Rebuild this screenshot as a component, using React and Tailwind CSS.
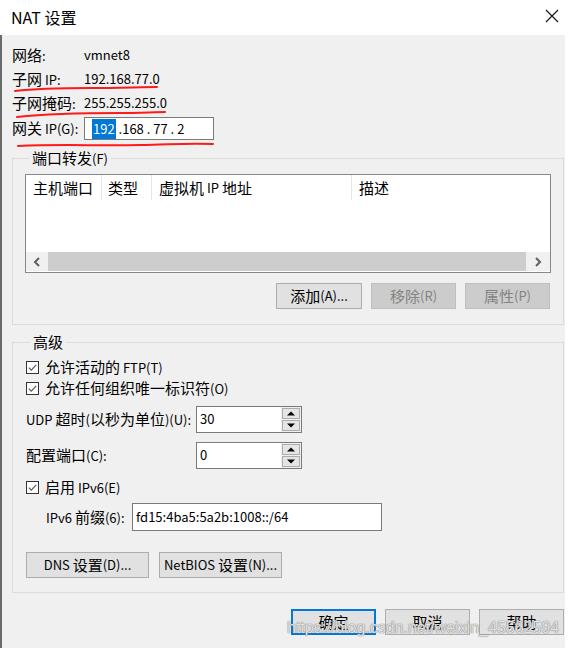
import React from "react";

const FONT = "font-['Microsoft_YaHei_UI','Noto_Sans_CJK_SC',sans-serif]";

// YaHei draws latin glyphs noticeably smaller than the CJK ones
const T = ({ children }) => {
    const parts = String(children).split(/([\u3000-\u9fff\uff00-\uffef]+)/);
    return (
        <>
            {parts.map((p, i) =>
                p === "" ? null : /[\u3000-\u9fff\uff00-\uffef]/.test(p) ? (
                    <span key={i}>{p}</span>
                ) : (
                    <span key={i} className="text-[13px] whitespace-pre">{p}</span>
                )
            )}
        </>
    );
};

const Check = () => (
    <span className="w-[13px] h-[13px] border border-[#333333] bg-white flex items-center justify-center shrink-0">
        <svg width="11" height="11" viewBox="0 0 11 11">
            <path d="M1.8 5.6 L4.3 8.1 L9.2 2.8" stroke="#5a5a5a" strokeWidth="1.2" fill="none" />
        </svg>
    </span>
);

const Btn = ({ children, disabled, primary, className = "" }) => (
    <div
        className={`h-[26px] flex items-center justify-center whitespace-nowrap text-[15px] leading-[20px] ${disabled
            ? "bg-[#cccccc] border border-[#bfbfbf] text-[#838383]"
            : primary
                ? "bg-[#e1e1e1] border-2 border-[#0078d7] text-black"
                : "bg-[#e1e1e1] border border-[#adadad] text-black"
            } ${className}`}
    >
        <T>{children}</T>
    </div>
);

const Spin = ({ value }) => (
    <div className="w-[106px] h-[27px] border border-[#7a7a7a] bg-white flex">
        <div className="flex-1 pl-[3px] pt-[1px] leading-[20px]">
            <T>{value}</T>
        </div>
        <div className="w-[20px] flex flex-col bg-[#f0f0f0] p-[1px] gap-[1px]">
            <div className="flex-1 bg-[#e5e5e5] border border-[#adadad] flex items-center justify-center">
                <svg width="8" height="5" viewBox="0 0 8 5"><path d="M0 4.5 L4 0.5 L8 4.5 Z" fill="#000" /></svg>
            </div>
            <div className="flex-1 bg-[#e5e5e5] border border-[#adadad] flex items-center justify-center">
                <svg width="8" height="5" viewBox="0 0 8 5"><path d="M0 0.5 L4 4.5 L8 0.5 Z" fill="#000" /></svg>
            </div>
        </div>
    </div>
);

const Chevron = ({ dir }) => (
    <svg width="8" height="10" viewBox="0 0 8 10">
        <path
            d={dir === "left" ? "M6 1 L2 5 L6 9" : "M2 1 L6 5 L2 9"}
            stroke="#606060"
            strokeWidth="2"
            fill="none"
        />
    </svg>
);

export default function App() {
    return (
        <div className={`relative w-[568px] h-[648px] bg-white flex flex-col text-black ${FONT}`}>
            {/* title bar */}
            <div className="h-[35px] flex items-center justify-between pl-[11px] pr-[8px] shrink-0">
                <span className="text-[16px] leading-[20px] -mt-[2px]">NAT 设置</span>
                <svg width="14" height="14" viewBox="0 0 14 14" className="mr-[1px] -mt-[4px]">
                    <path d="M1 1 L13 13 M13 1 L1 13" stroke="#111" strokeWidth="1.1" />
                </svg>
            </div>

            {/* body */}
            <div className="flex-1 bg-[#f0f0f0] border-l-2 border-[#6b6b6b] mr-[3px] pl-[10px] pr-[1px] text-[15px] leading-[20px] whitespace-nowrap">
                <div className="pt-[8px] flex flex-col">
                    <div className="h-[24px] flex items-center">
                        <span className="w-[72px]"><T>网络:</T></span>
                        <T>vmnet8</T>
                    </div>
                    <div className="h-[24px] flex items-center">
                        <span className="w-[72px]"><T>子网 IP:</T></span>
                        <T>192.168.77.0</T>
                    </div>
                    <div className="h-[24px] flex items-center">
                        <span className="w-[72px]"><T>子网掩码:</T></span>
                        <T>255.255.255.0</T>
                    </div>
                    <div className="mt-[2px] h-[23px] flex items-center">
                        <span className="w-[72px]"><T>网关 IP(G):</T></span>
                        <div className="w-[130px] h-[23px] border border-[#7a7a7a] bg-white flex items-center pl-[7px] text-[13px]">
                            <span className="bg-[#0078d7] text-white px-[1px]">192</span>
                            <span className="whitespace-pre"> .168 . 77 . 2</span>
                        </div>
                    </div>
                </div>

                {/* port forwarding */}
                <fieldset className="mt-[8px] border border-[#dcdcdc] px-[12px] pb-[15px]">
                    <legend className="ml-[4px] px-[3px] leading-[20px]"><T>端口转发(F)</T></legend>
                    <div className="mt-[5px] h-[99px] border border-[#828790] bg-white flex flex-col">
                        <div className="h-[25px] flex">
                            <div className="w-[76px] border-r border-[#e5e5e5] pl-[7px] flex items-center">主机端口</div>
                            <div className="w-[50px] border-r border-[#e5e5e5] pl-[6px] flex items-center">类型</div>
                            <div className="w-[200px] border-r border-[#e5e5e5] pl-[7px] flex items-center"><T>虚拟机 IP 地址</T></div>
                            <div className="flex-1 pl-[7px] flex items-center">描述</div>
                        </div>
                        <div className="flex-1" />
                        <div className="h-[19px] mb-[1px] flex">
                            <div className="w-[22px] bg-[#f0f0f0] flex items-center justify-center">
                                <Chevron dir="left" />
                            </div>
                            <div className="flex-1 bg-[#cdcdcd]" />
                            <div className="w-[24px] bg-[#f0f0f0] flex items-center justify-center">
                                <Chevron dir="right" />
                            </div>
                        </div>
                    </div>
                    <div className="mt-[10px] flex justify-end gap-[9px] pr-[1px]">
                        <Btn className="w-[86px]">添加(A)...</Btn>
                        <Btn className="w-[85px]" disabled>移除(R)</Btn>
                        <Btn className="w-[85px]" disabled>属性(P)</Btn>
                    </div>
                </fieldset>

                {/* advanced */}
                <fieldset className="mt-[7px] border border-[#dcdcdc] pl-[13px] pr-[12px] pb-[14px]">
                    <legend className="ml-[4px] px-[3px] leading-[20px]">高级</legend>
                    <div className="mt-[5px] flex flex-col">
                        <div className="h-[21px] flex items-center gap-[6px]">
                            <Check />
                            <span><T>允许活动的 FTP(T)</T></span>
                        </div>
                        <div className="h-[21px] flex items-center gap-[6px]">
                            <Check />
                            <span><T>允许任何组织唯一标识符(O)</T></span>
                        </div>
                        <div className="mt-[7px] flex items-center">
                            <span className="w-[170px]"><T>UDP 超时(以秒为单位)(U):</T></span>
                            <Spin value="30" />
                        </div>
                        <div className="mt-[9px] flex items-center">
                            <span className="w-[170px]"><T>配置端口(C):</T></span>
                            <Spin value="0" />
                        </div>
                        <div className="mt-[10px] h-[17px] flex items-center gap-[6px]">
                            <Check />
                            <span><T>启用 IPv6(E)</T></span>
                        </div>
                        <div className="mt-[7px] flex items-center">
                            <span className="w-[106px] pl-[20px]"><T>IPv6 前缀(6):</T></span>
                            <div className="w-[250px] h-[28px] border border-[#7a7a7a] bg-white pl-[3px] pt-[3px] text-[13px]">
                                fd15:4ba5:5a2b:1008::/64
                            </div>
                        </div>
                        <div className="mt-[21px] flex gap-[10px]">
                            <Btn className="w-[123px]">DNS 设置(D)...</Btn>
                            <Btn className="w-[123px]">NetBIOS 设置(N)...</Btn>
                        </div>
                    </div>
                </fieldset>

                <div className="mt-[16px] flex justify-end gap-[9px]">
                    <Btn className="w-[85px]" primary>确定</Btn>
                    <Btn className="w-[85px]">取消</Btn>
                    <Btn className="w-[85px]">帮助</Btn>
                </div>
            </div>

            {/* red hand-drawn underlines */}
            <svg className="absolute left-0 top-0 pointer-events-none" width="568" height="648">
                <path d="M15 91 C 40 88, 60 88, 90 88 S 140 87, 157 87" stroke="#ff1a1a" strokeWidth="2" fill="none" strokeLinecap="round" />
                <path d="M17 117 C 45 114, 80 113, 120 113 S 150 112, 165 112" stroke="#ff1a1a" strokeWidth="2" fill="none" strokeLinecap="round" />
                <path d="M18 146 C 60 144, 100 146, 140 145 S 190 143, 213 144" stroke="#ff1a1a" strokeWidth="2" fill="none" strokeLinecap="round" />
            </svg>

            {/* watermark */}
            <div className="absolute left-[287px] top-[618px] font-['Liberation_Sans',sans-serif] text-[16px] leading-[20px] text-white/80 [text-shadow:0_0_1px_#666,0_0_1px_#888] pointer-events-none">
                https://blog.csdn.net/weixin_45562594
            </div>
        </div>
    );
}
